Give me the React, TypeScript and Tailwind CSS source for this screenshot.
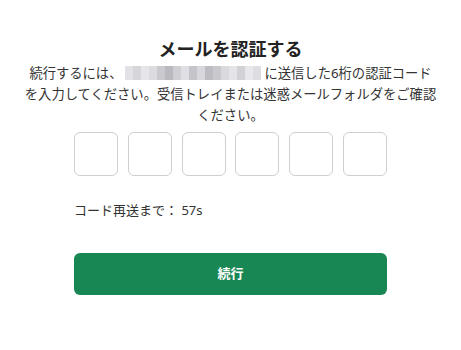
import { useState } from "react";

const font = { fontFamily: '"Noto Sans", "Noto Sans CJK JP", sans-serif' };

// pixelated blocks standing in for the masked address
const mask = [
  "bg-[#e2e2e6]", "bg-[#d6d6da]", "bg-[#e6e6ea]", "bg-[#dcdce0]", "bg-[#c9c9ce]",
  "bg-[#b9b9bf]", "bg-[#d0d0d4]", "bg-[#e0e0e4]", "bg-[#c4c4ca]", "bg-[#d8d8dc]",
  "bg-[#bcbcc2]", "bg-[#c8c8cd]", "bg-[#dadade]", "bg-[#e4e4e8]", "bg-[#d2d2d6]",
  "bg-[#e8e8ec]", "bg-[#dedee2]",
];

export default function App() {
  const [code, setCode] = useState(["", "", "", "", "", ""]);

  return (
    <div className="min-h-[350px] bg-white text-[#333]" style={font}>
      <div className="mx-auto w-[412px] pt-[36px] text-center">
        <h1 className="text-[18px] font-bold leading-[26px] text-[#222]">
          メールを認証する
        </h1>
        <p className="mt-[1px] text-[13.3px] leading-[21px]">
          続行するには、
          <span className="mx-[3px] inline-flex h-[14px] w-[136px] translate-y-[2px] overflow-hidden">
            {mask.map((c, i) => (
              <span key={i} className={`h-full flex-1 ${c}`} />
            ))}
          </span>
          に送信した6桁の認証コードを入力してください。受信トレイまたは迷惑メールフォルダをご確認ください。
        </p>
      </div>

      <div className="mx-auto mt-[6px] w-[313px]">
        <div className="flex justify-between">
          {code.map((v, i) => (
            <input
              key={i}
              value={v}
              maxLength={1}
              onChange={(e) => {
                const next = [...code];
                next[i] = e.target.value;
                setCode(next);
              }}
              className="h-[44px] w-[44px] rounded-[6px] border border-[#cfcfcf] text-center text-[18px] outline-none"
            />
          ))}
        </div>

        <div className="mt-[24px] text-[13px] leading-[20px]">コード再送まで： 57s</div>

        <button className="mt-[33px] h-[42px] w-full rounded-[6px] bg-[#198754] text-[13px] font-bold text-white">
          続行
        </button>
      </div>
    </div>
  );
}
